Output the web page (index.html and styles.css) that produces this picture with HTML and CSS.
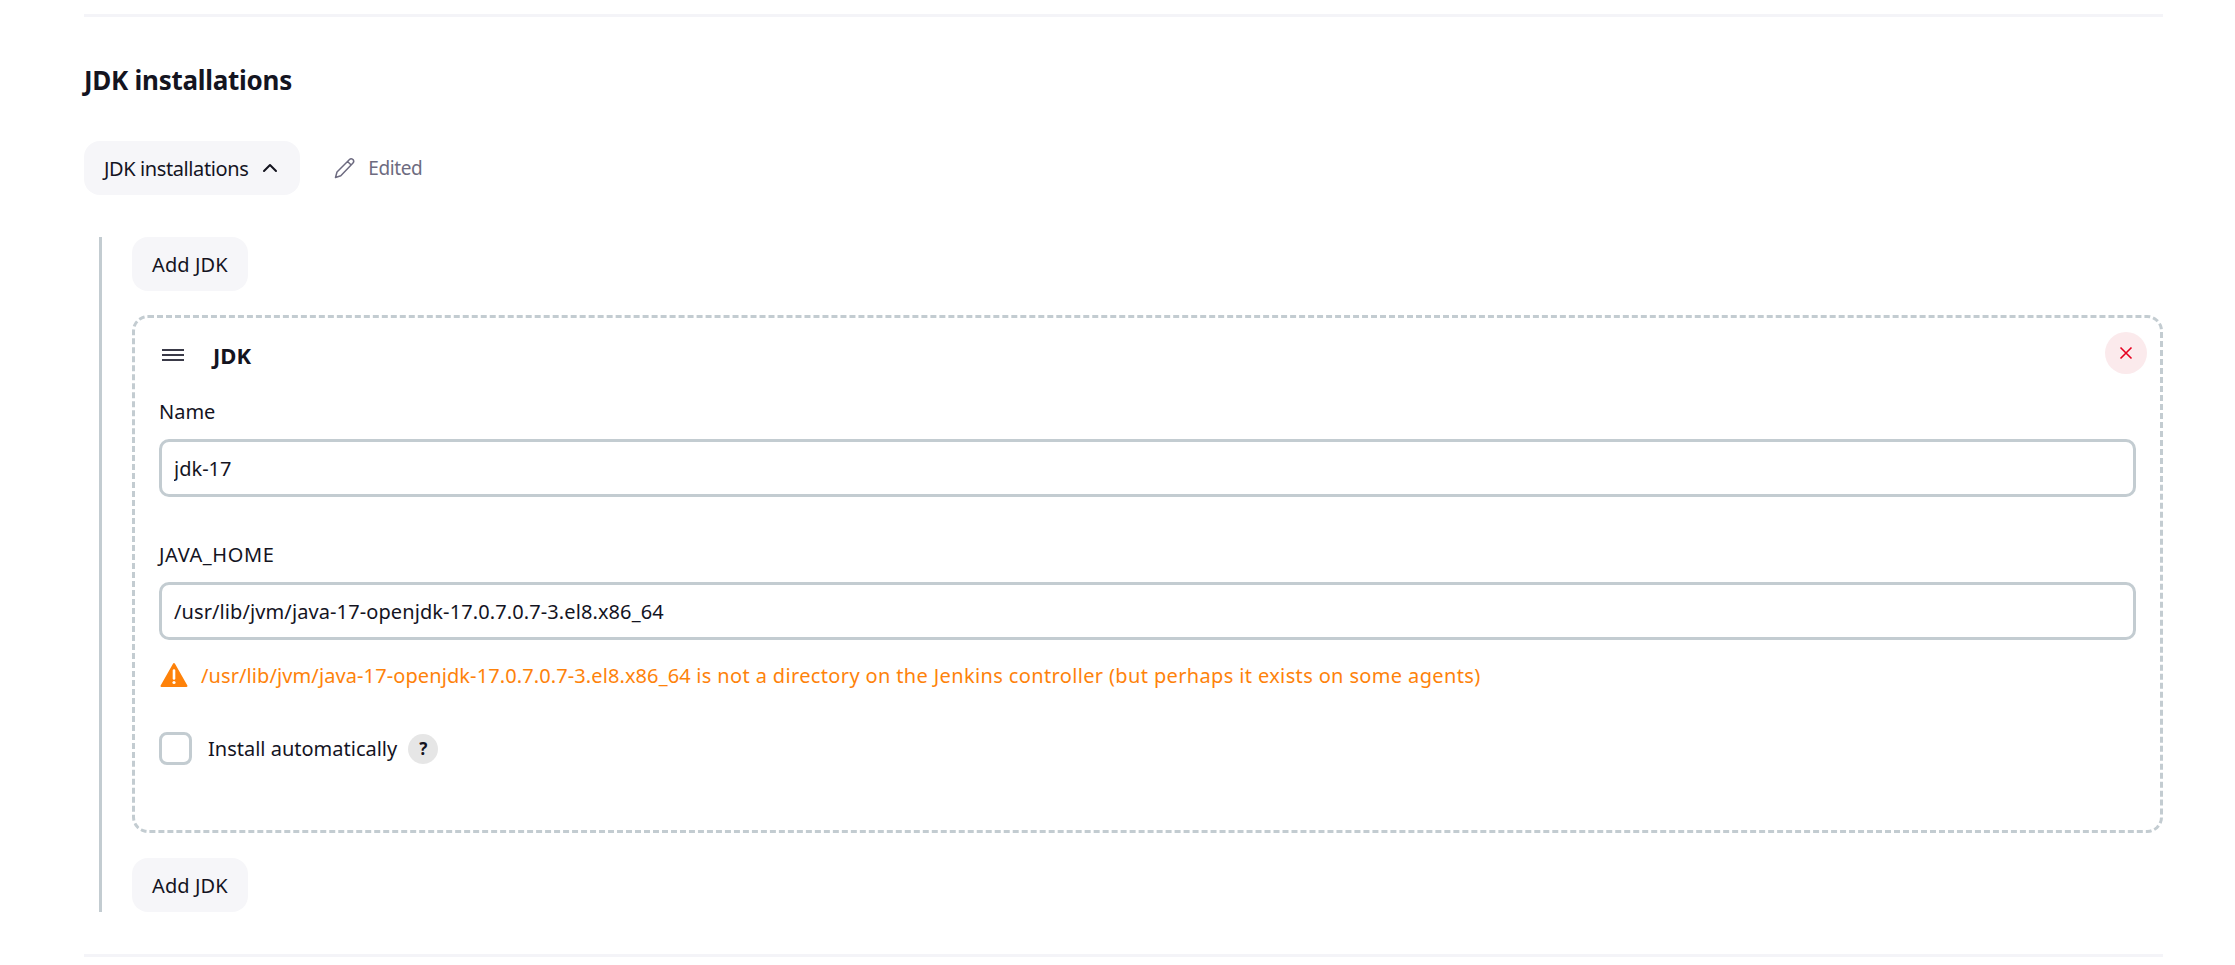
FILE: index.html
```html
<!DOCTYPE html>
<html lang="en">
<head>
    <meta charset="UTF-8">
    <title>JDK installations</title>
    <link rel="stylesheet" href="styles.css">
</head>
<body>
    <div class="section">
        <h2>JDK installations</h2>

        <div class="toggle-row">
            <button class="btn btn-toggle">
                JDK installations
                <svg class="chevron" width="16" height="16" viewBox="0 0 16 16"><path d="M2 11 L8 5 L14 11" fill="none" stroke="#14141f" stroke-width="2" stroke-linecap="round" stroke-linejoin="round"/></svg>
            </button>
            <span class="edited">
                <svg width="22" height="22" viewBox="0 0 22 22"><path d="M1.5 20.5 L3 15 L15.5 2.5 Q17 1 19 2.5 Q20.5 4.5 19 6 L6.8 18.8 Z M13.5 4.5 L17.2 8" fill="none" stroke="#6d6b80" stroke-width="1.5" stroke-linejoin="round"/></svg>
                Edited
            </span>
        </div>

        <div class="repeatable">
            <button class="btn">Add JDK</button>

            <div class="card">
                <div class="card-head">
                    <svg width="24" height="14" viewBox="0 0 24 14"><path d="M1 2 H23 M1 7 H23 M1 12 H23" stroke="#3a3a48" stroke-width="2"/></svg>
                    <b>JDK</b>
                    <button class="btn-close">
                        <svg width="14" height="14" viewBox="0 0 14 14"><path d="M1.5 1.5 L12.5 12.5 M12.5 1.5 L1.5 12.5" stroke="#e6001f" stroke-width="1.6"/></svg>
                    </button>
                </div>

                <label class="field-label">Name</label>
                <input class="text-input" type="text" value="jdk-17">

                <label class="field-label label-home">JAVA_HOME</label>
                <input class="text-input input-path" type="text" value="/usr/lib/jvm/java-17-openjdk-17.0.7.0.7-3.el8.x86_64">

                <div class="warning">
                    <svg width="28" height="26" viewBox="0 0 28 26"><path d="M14 2 L26.5 24 H1.5 Z" fill="#fe820a" stroke="#fe820a" stroke-width="2" stroke-linejoin="round"/><path d="M14 8.5 V16.5" stroke="#fff" stroke-width="2.6" stroke-linecap="round"/><circle cx="14" cy="20.5" r="1.6" fill="#fff"/></svg>
                    <span><span class="warning-path">/usr/lib/jvm/java-17-openjdk-17.0.7.0.7-3.el8.x86_64</span> is not a directory on the Jenkins controller (but perhaps it exists on some agents)</span>
                </div>

                <div class="check-row">
                    <span class="checkbox"></span>
                    <span>Install automatically</span>
                    <span class="help">?</span>
                </div>
            </div>

            <button class="btn">Add JDK</button>
        </div>
    </div>
</body>
</html>
```

FILE: styles.css
```css
html, body {
    margin: 0;
    background: #fff;
}
body {
    font-family: "Noto Sans", sans-serif;
    font-size: 20px;
    color: #14141f;
    height: 965px;
    overflow: hidden;
}
.section {
    margin: 14px 72px 0 84px;
    border-top: 3px solid #f4f4f8;
    border-bottom: 3px solid #f4f4f8;
    height: 937px;
}
h2 {
    margin: 46px 0 0;
    font-size: 26px;
    line-height: 34px;
    font-weight: 700;
    letter-spacing: -0.27px;
}
.toggle-row {
    display: flex;
    align-items: center;
    margin-top: 44px;
}
.btn {
    display: block;
    height: 54px;
    padding: 0 20px;
    border: none;
    border-radius: 16px;
    background: #f6f6f9;
    color: #14141f;
    font-family: inherit;
    font-size: 20px;
    letter-spacing: 0.1px;
}
.btn-toggle {
    display: flex;
    align-items: center;
    gap: 14px;
    padding-right: 22px;
    letter-spacing: -0.4px;
}
.edited {
    display: flex;
    align-items: center;
    gap: 12px;
    margin-left: 34px;
    color: #6d6b80;
    font-size: 19px;
    letter-spacing: -0.4px;
}
.repeatable {
    margin: 42px 0 0 15px;
    padding-left: 30px;
    border-left: 3px solid #c3ccd1;
}
.card {
    margin: 24px 0 25px;
    height: 518px;
    box-sizing: border-box;
    padding: 0 24px;
    border: 3px dashed #c3ccd1;
    border-radius: 16px;
}
.card-head {
    display: flex;
    align-items: center;
    gap: 28px;
    height: 73px;
    margin-bottom: 7px;
    padding-left: 2px;
    position: relative;
    font-size: 22px;
}
.btn-close {
    position: absolute;
    top: 14px;
    right: -11px;
    width: 42px;
    height: 42px;
    padding: 0;
    border: none;
    border-radius: 50%;
    background: #fbeaec;
    display: flex;
    align-items: center;
    justify-content: center;
}
.field-label {
    display: block;
    line-height: 26px;
    padding-top: 1px;
}
.label-home {
    margin-top: 43px;
    padding-top: 2px;
    letter-spacing: 0.6px;
}
.text-input {
    display: block;
    box-sizing: border-box;
    width: 100%;
    height: 58px;
    margin-top: 14px;
    padding: 0 12px;
    border: 3px solid #c3ccd1;
    border-radius: 10px;
    background: #fff;
    color: #14141f;
    font-family: inherit;
    font-size: 20px;
}
.input-path {
    letter-spacing: 0.1px;
}
.warning {
    display: flex;
    align-items: center;
    gap: 13px;
    margin-top: 22px;
    height: 26px;
    padding-left: 1px;
    color: #fe820a;
    white-space: nowrap;
    letter-spacing: 0.36px;
}
.warning-path {
    letter-spacing: 0.1px;
}
.check-row {
    display: flex;
    align-items: center;
    margin-top: 44px;
}
.checkbox {
    width: 33px;
    height: 33px;
    box-sizing: border-box;
    border: 3px solid #c3ccd1;
    border-radius: 8px;
    margin-right: 16px;
}
.help {
    width: 30px;
    height: 30px;
    margin-left: 11px;
    border-radius: 50%;
    background: #e6e6e6;
    display: flex;
    align-items: center;
    justify-content: center;
    font-size: 17px;
    font-weight: 700;
}
```
